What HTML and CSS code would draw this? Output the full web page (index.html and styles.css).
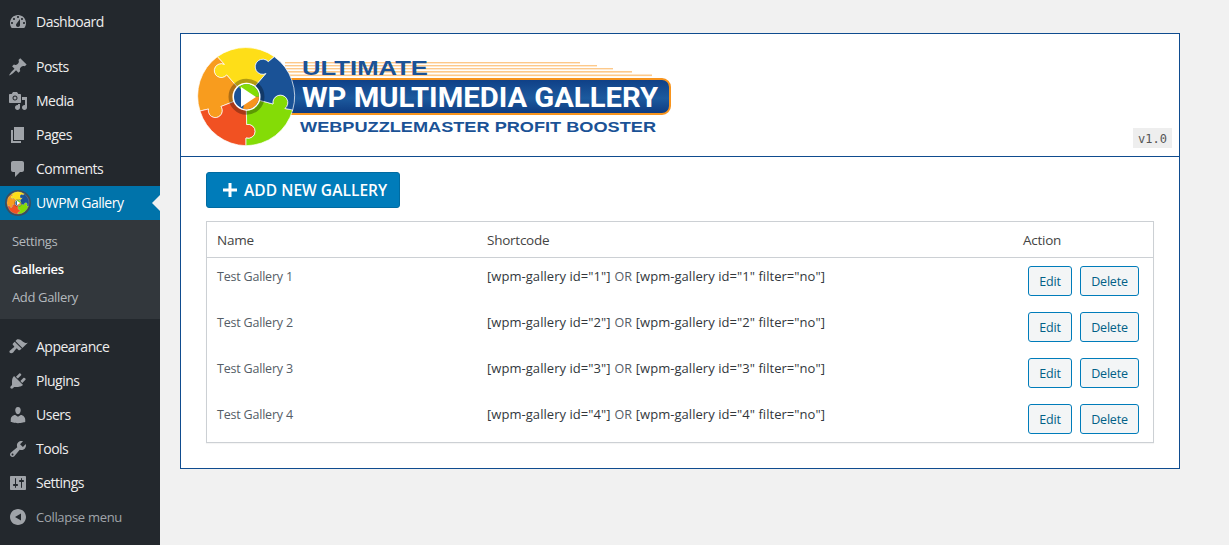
FILE: index.html
```html
<!DOCTYPE html>
<html lang="en">
<head>
<meta charset="utf-8">
<title>UWPM Gallery</title>
<link rel="stylesheet" href="styles.css">
</head>
<body>
<svg class="defs" aria-hidden="true">
  <defs>
    <linearGradient id="ban" x1="0" y1="0" x2="0" y2="1">
      <stop offset="0" stop-color="#0f3f86"/><stop offset=".55" stop-color="#1c5a9e"/><stop offset="1" stop-color="#0d3a80"/>
    </linearGradient>
    <g id="puzzle">
      <g stroke="#fff" stroke-width=".7" stroke-linejoin="round">
        <path fill="#fede18" d="M246 96.700 226.700 75A7 7 0 1 1 224.300 64.300L217.300 56.700A49 49 0 0 1 274.300 56.700L268.300 61.700A7.500 7.500 0 1 0 266 73.500Z"/>
        <path fill="#f89c1e" d="M246 96.700 221 106.500A7 7 0 1 1 208.500 109L200 111A49 49 0 0 1 217.300 56.700L224.300 64.300A7 7 0 1 0 226.700 75Z"/>
        <path fill="#f15122" d="M246 96.700 246.700 124.500A7 7 0 1 1 246 138L246 145.700A49 49 0 0 1 200 111L208.500 109A7 7 0 1 0 221 106.500Z"/>
        <path fill="#84dc06" d="M246 96.700 273 104A7.500 7.500 0 1 1 285 108.500L292.700 110A49 49 0 0 1 246 145.700L246 138A7 7 0 1 0 246.700 124.500Z"/>
        <path fill="#1a5296" d="M246 96.700 266 73.500A7.500 7.500 0 1 1 268.300 61.700L274.300 56.700A49 49 0 0 1 292.700 110L285 108.500A7.500 7.500 0 1 0 273 104Z"/>
      </g>
      <circle cx="246.500" cy="96.700" r="16" fill="none" stroke="#000" stroke-opacity=".3" stroke-width="4"/>
      <circle cx="246.500" cy="96.700" r="14" fill="#fff"/>
      <circle cx="246.500" cy="96.700" r="12.500" fill="#1a5296"/>
      <path fill="#84dc06" d="M239 86.700A12.500 12.500 0 0 1 259 96.700H246z"/>
      <path fill="#f7941e" d="M259 96.700A12.500 12.500 0 0 1 243 108.700L246 96.700z"/>
      <path fill="#fff" d="M241 87V107L256 97z"/>
    </g>
  </defs>
</svg>
<div class="wrap">
<nav class="side">
  <ul class="menu first">
    <li class="item"><svg class="ico" viewBox="0 0 20 20"><path fill-rule="evenodd" d="M3.760 16h12.480c1.100-1.370 1.760-3.110 1.760-5 0-4.420-3.580-8-8-8s-8 3.580-8 8c0 1.890.66 3.630 1.760 5zM10 4c.55 0 1 .45 1 1s-.45 1-1 1-1-.45-1-1 .45-1 1-1zM6 6c.55 0 1 .45 1 1s-.45 1-1 1-1-.45-1-1 .45-1 1-1zm8 0c.55 0 1 .45 1 1s-.45 1-1 1-1-.45-1-1 .45-1 1-1zm-5.370 5.550L12 7v6c0 1.100-.9 2-2 2s-2-.9-2-2c0-.57.24-1.080.63-1.450zM4 10c.55 0 1 .45 1 1s-.45 1-1 1-1-.45-1-1 .45-1 1-1zm12 0c.55 0 1 .45 1 1s-.45 1-1 1-1-.45-1-1 .45-1 1-1z"/></svg><span>Dashboard</span></li>
  </ul>
  <ul class="menu group">
    <li class="item"><svg class="ico" viewBox="0 0 20 20"><path d="M10.440 3.020l1.820-1.820 6.360 6.350-1.830 1.820c-1.050-.68-2.480-.57-3.410.36l-.75.75c-.92.93-1.040 2.350-.35 3.410l-1.830 1.820-2.410-2.410-2.800 2.790c-.42.42-3.380 2.710-3.800 2.290s1.860-3.390 2.280-3.810l2.790-2.790L4.100 9.360l1.830-1.820c1.050.69 2.480.57 3.400-.36l.75-.75c.93-.92 1.050-2.350.36-3.410z"/></svg><span>Posts</span></li>
    <li class="item"><svg class="ico" viewBox="0 0 20 20"><path fill-rule="evenodd" d="M13 11V4c0-.55-.45-1-1-1h-1.670L9 1H5L3.670 3H2c-.55 0-1 .45-1 1v7c0 .55.45 1 1 1h10c.55 0 1-.45 1-1zM7 4.500c1.380 0 2.500 1.120 2.500 2.500S8.380 9.500 7 9.500 4.500 8.380 4.500 7 5.620 4.500 7 4.500z"/><path d="M14 6h5v10.500c0 1.380-1.120 2.500-2.500 2.500S14 17.880 14 16.500s1.120-2.500 2.500-2.500c.17 0 .34.02.5.05V9h-3V6zm-4 8.050V13h2v3.500c0 1.380-1.120 2.500-2.500 2.500S7 17.880 7 16.500 8.120 14 9.500 14c.17 0 .34.02.5.05z"/><circle cx="7" cy="7" r="1.500"/></svg><span>Media</span></li>
    <li class="item"><svg class="ico" viewBox="0 0 20 20"><path d="M6 15V2h10v13H6zm-1 1h8v2H3V5h2v11z"/></svg><span>Pages</span></li>
    <li class="item"><svg class="ico" viewBox="0 0 20 20"><path d="M5 2h9c1.100 0 2 .9 2 2v7c0 1.100-.9 2-2 2h-2l-5 5v-5H5c-1.100 0-2-.9-2-2V4c0-1.100.9-2 2-2z"/></svg><span>Comments</span></li>
    <li class="item current">
      <svg class="plug" viewBox="188 38.700 116 116">
        <circle cx="246" cy="96.700" r="58" fill="#3d4d5c"/>
        <use href="#puzzle"/>
      </svg>
      <span>UWPM Gallery</span><i class="pointer"></i>
    </li>
  </ul>
  <ul class="sub">
    <li>Settings</li>
    <li class="on">Galleries</li>
    <li>Add Gallery</li>
  </ul>
  <ul class="menu group2">
    <li class="item"><svg class="ico" viewBox="0 0 20 20"><path d="M14.480 11.060 7.410 3.990l1.500-1.500c.5-.56 2.300-.47 3.510.32 1.210.8 1.430 1.280 2.910 2.100 1.180.64 2.450 1.260 4.450.85zm-.71.71L6.700 4.700 4.930 6.470c-.39.39-.39 1.020 0 1.410l1.060 1.060c.39.39.39 1.030 0 1.420-.6.6-1.430 1.110-2.210 1.690-.35.26-.7.53-1.010.84C1.430 13.230.95 14.870 1.850 15.770c.9.9 2.540.42 3.600-.64.31-.31.58-.66.84-1.010.58-.78 1.090-1.610 1.690-2.210.39-.39 1.030-.39 1.420 0l1.060 1.060c.39.39 1.020.39 1.410 0z"/></svg><span>Appearance</span></li>
    <li class="item"><svg class="ico" viewBox="0 0 20 20"><path d="M13.110 4.360 9.870 7.600 8 5.730l3.240-3.240c.35-.34 1.050-.2 1.560.32.52.51.66 1.210.31 1.550zm-8 1.770.91-1.120 9.010 9.010-1.190.84c-.71.71-2.630 1.160-3.820 1.160H6.140L4.900 17.260c-.59.59-1.540.59-2.120 0-.59-.58-.59-1.530 0-2.120l1.240-1.240v-3.880c0-1.130.4-3.190 1.090-3.890zm7.260 3.970 3.240-3.240c.34-.35 1.040-.21 1.550.31.52.51.66 1.210.31 1.550l-3.240 3.250z"/></svg><span>Plugins</span></li>
    <li class="item"><svg class="ico" viewBox="0 0 20 20"><path d="M10 9.250c-2.270 0-2.730-3.440-2.730-3.440C7 4.020 7.820 2 9.970 2c2.160 0 2.980 2.020 2.710 3.810 0 0-.41 3.440-2.680 3.440zm0 2.570L12.720 10c2.390 0 4.520 2.330 4.520 4.530v2.490s-3.650 1.130-7.240 1.130c-3.650 0-7.240-1.130-7.240-1.130v-2.490c0-2.250 1.940-4.480 4.470-4.480z"/></svg><span>Users</span></li>
    <li class="item"><svg class="ico" viewBox="0 0 20 20"><path fill-rule="evenodd" d="M16.680 9.770c-1.340 1.340-3.300 1.670-4.950.99l-5.410 6.520c-.99.99-2.590.99-3.580 0s-.99-2.590 0-3.570l6.520-5.420c-.68-1.650-.35-3.610.99-4.950 1.280-1.280 3.120-1.620 4.720-1.060l-2.890 2.890 2.820 2.820 2.860-2.870c.53 1.580.18 3.390-1.080 4.650zM3.810 16.210c.4.39 1.040.39 1.430 0 .4-.4.4-1.040 0-1.430-.39-.4-1.030-.4-1.430 0-.39.39-.39 1.030 0 1.430z"/></svg><span>Tools</span></li>
    <li class="item"><svg class="ico" viewBox="0 0 20 20"><path fill-rule="evenodd" d="M18 16V4c0-.55-.45-1-1-1H3c-.55 0-1 .45-1 1v12c0 .55.45 1 1 1h14c.55 0 1-.45 1-1zM8 11h1c.55 0 1 .45 1 1s-.45 1-1 1H8v1.500c0 .28-.22.5-.5.5s-.5-.22-.5-.5V13H6c-.55 0-1-.45-1-1s.45-1 1-1h1V5.500c0-.28.22-.5.5-.5s.5.22.5.5V11zm5-2h-1c-.55 0-1-.45-1-1s.45-1 1-1h1V5.500c0-.28.22-.5.5-.5s.5.22.5.5V7h1c.55 0 1 .45 1 1s-.45 1-1 1h-1v5.500c0 .28-.22.5-.5.5s-.5-.22-.5-.5V9z"/></svg><span>Settings</span></li>
    <li class="item collapse"><svg class="ico" viewBox="0 0 20 20"><path fill-rule="evenodd" d="M18 10c0-4.420-3.580-8-8-8s-8 3.580-8 8 3.580 8 8 8 8-3.580 8-8zM13 6.500v7L7 10z"/></svg><span>Collapse menu</span></li>
  </ul>
</nav>
<main class="content">
  <section class="card">
    <header class="head">
      <svg class="logo" viewBox="190 40 490 112" role="img" aria-label="Ultimate WP Multimedia Gallery">
        <g fill="#fdc98a">
          <rect x="285" y="62" width="295" height="1.400"/>
          <rect x="285" y="65" width="312" height="1.400"/>
          <rect x="285" y="68" width="328" height="1.400"/>
          <rect x="285" y="71" width="347" height="1.600"/>
          <rect x="285" y="74.500" width="367" height="1.600"/>
        </g>
        <text class="l1" x="302" y="75" textLength="126" lengthAdjust="spacingAndGlyphs">ULTIMATE</text>
        <path fill="url(#ban)" stroke="#f7941e" stroke-width="2" d="M286 79H662a8 8 0 0 1 8 8V106a8 8 0 0 1-8 8H286z"/>
        <text class="l2" x="302" y="107" textLength="356" lengthAdjust="spacingAndGlyphs">WP MULTIMEDIA GALLERY</text>
        <text class="l3" x="300" y="132" textLength="356" lengthAdjust="spacingAndGlyphs">WEBPUZZLEMASTER PROFIT BOOSTER</text>
        <use href="#puzzle"/>
      </svg>
      <code class="ver">v1.0</code>
    </header>
    <div class="body">
      <a class="add"><svg class="plus" viewBox="0 0 14 14"><path d="M5.500 0h3v5.500H14v3H8.500V14h-3V8.500H0v-3h5.500z"/></svg>ADD NEW GALLERY</a>
      <div class="table">
        <div class="row th"><div class="c1">Name</div><div class="c2">Shortcode</div><div class="c3">Action</div></div>
        <div class="row"><div class="c1">Test Gallery 1</div><div class="c2"><b>[wpm-gallery id="1"]</b> OR <b>[wpm-gallery id="1" filter="no"]</b></div><div class="c3"><a class="btn edit">Edit</a><a class="btn del">Delete</a></div></div>
        <div class="row"><div class="c1">Test Gallery 2</div><div class="c2"><b>[wpm-gallery id="2"]</b> OR <b>[wpm-gallery id="2" filter="no"]</b></div><div class="c3"><a class="btn edit">Edit</a><a class="btn del">Delete</a></div></div>
        <div class="row"><div class="c1">Test Gallery 3</div><div class="c2"><b>[wpm-gallery id="3"]</b> OR <b>[wpm-gallery id="3" filter="no"]</b></div><div class="c3"><a class="btn edit">Edit</a><a class="btn del">Delete</a></div></div>
        <div class="row"><div class="c1">Test Gallery 4</div><div class="c2"><b>[wpm-gallery id="4"]</b> OR <b>[wpm-gallery id="4" filter="no"]</b></div><div class="c3"><a class="btn edit">Edit</a><a class="btn del">Delete</a></div></div>
      </div>
    </div>
  </section>
</main>
</div>
</body>
</html>
```
FILE: styles.css
```css
* { box-sizing: border-box; }
html, body { margin: 0; height: 100%; }
body {
  background: #f1f1f1;
  font-family: "Open Sans", "Noto Sans", sans-serif;
  color: #444;
  overflow: hidden;
}
.defs { display: block; width: 0; height: 0; overflow: hidden; }
.wrap { display: flex; height: 545px; }
.side { width: 160px; flex: none; background: #23282d; padding-top: 5px; }
ul { list-style: none; margin: 0; padding: 0; }
.group { margin-top: 11px; }
.group2 { margin-top: 11px; }
.item {
  position: relative;
  height: 34px;
  display: flex;
  align-items: center;
  color: #eee;
  font-size: 14px;
  letter-spacing: -.5px;
}
.item span { margin-left: 8px; padding-bottom: 2px; }
.ico { width: 20px; height: 20px; margin-left: 8px; fill: #9fa3a8; flex: none; }
.current { background: #0073aa; color: #fff; }
.plug { width: 26px; height: 26px; margin-left: 5px; margin-right: -3px; flex: none; }
.pointer {
  position: absolute;
  right: 0;
  top: 9px;
  border: 8px solid transparent;
  border-right-color: #f1f1f1;
  border-left-width: 0;
}
.collapse { color: #a0a5aa; font-size: 13px; letter-spacing: -.3px; }
.collapse span { padding-bottom: 0; }
.sub { background: #32373c; padding: 7px 0; height: 99px; }
.sub li {
  height: 28px;
  line-height: 28px;
  padding-left: 12px;
  font-size: 13px;
  letter-spacing: -.35px;
  color: #b4b9be;
}
.sub .on { color: #fff; font-weight: 600; }
.content { flex: 1; padding: 33px 49px 0 20px; }
.card { background: #fff; border: 1px solid #0f4c8f; height: 436px; }
.head {
  height: 123px;
  border-bottom: 1px solid #0f4c8f;
  display: flex;
  justify-content: space-between;
  align-items: flex-start;
  padding: 6px 7px 0 9px;
}
.logo { width: 490px; height: 112px; flex: none; }
.l1, .l2, .l3 { font-weight: 700; }
.l1 { font-family: "Liberation Sans", sans-serif; font-size: 20px; fill: #1a5296; }
.l2 { font-family: Roboto, sans-serif; font-size: 27px; fill: #fff; }
.l3 { font-family: "Liberation Sans", sans-serif; font-size: 15px; fill: #1a5296; }
.ver {
  margin-top: 88px;
  height: 20px;
  padding: 1px 5px 0;
  background: #eee;
  color: #555;
  font: 12px/20px "DejaVu Sans Mono", monospace;
}
.body { padding: 15px 25px 0; }
.add {
  display: flex;
  align-items: center;
  width: 194px;
  height: 36px;
  background: #007cba;
  border: 1px solid #006ba1;
  border-radius: 3px;
  color: #fff;
  font-size: 15.500px;
  font-weight: 600;
  letter-spacing: .05px;
  padding-left: 16px;
}
.plus { width: 14px; height: 14px; fill: #fff; margin-right: 7px; flex: none; }
.table { margin-top: 13px; border: 1px solid #ccd0d4; box-shadow: 0 1px 1px rgba(0,0,0,.04); height: 222px; }
.row { display: flex; height: 46px; font-size: 12.500px; letter-spacing: -.2px; color: #555d66; padding-left: 10px; }
.row > div { padding-top: 10px; }
.row > .c2 { padding-top: 9px; word-spacing: 1px; }
.row > .c3 { padding-top: 8px; }
.th { height: 36px; border-bottom: 1px solid #ccd0d4; font-size: 13.500px; letter-spacing: -.25px; color: #444; }
.th > div { padding-top: 9px; }
.th > .c2 { padding-top: 9px; }
.th > .c3 { padding-top: 9px; }
.c1 { width: 270px; }
.c2 { width: 536px; }
.c2 b { font-weight: 400; font-size: 13px; letter-spacing: .05px; word-spacing: 0; color: #32373c; }
.c3 { display: flex; gap: 8px; align-items: flex-start; flex: none; padding-left: 5px; }
.th .c3 { padding-left: 0; }
.btn {
  display: block;
  height: 30px;
  padding-top: 1px;
  line-height: 28px;
  text-align: center;
  border: 1px solid #007cba;
  border-radius: 3px;
  background: #f3f5f6;
  color: #016087;
  font-size: 12.500px;
}
.edit { width: 44px; }
.del { width: 59px; }
```
